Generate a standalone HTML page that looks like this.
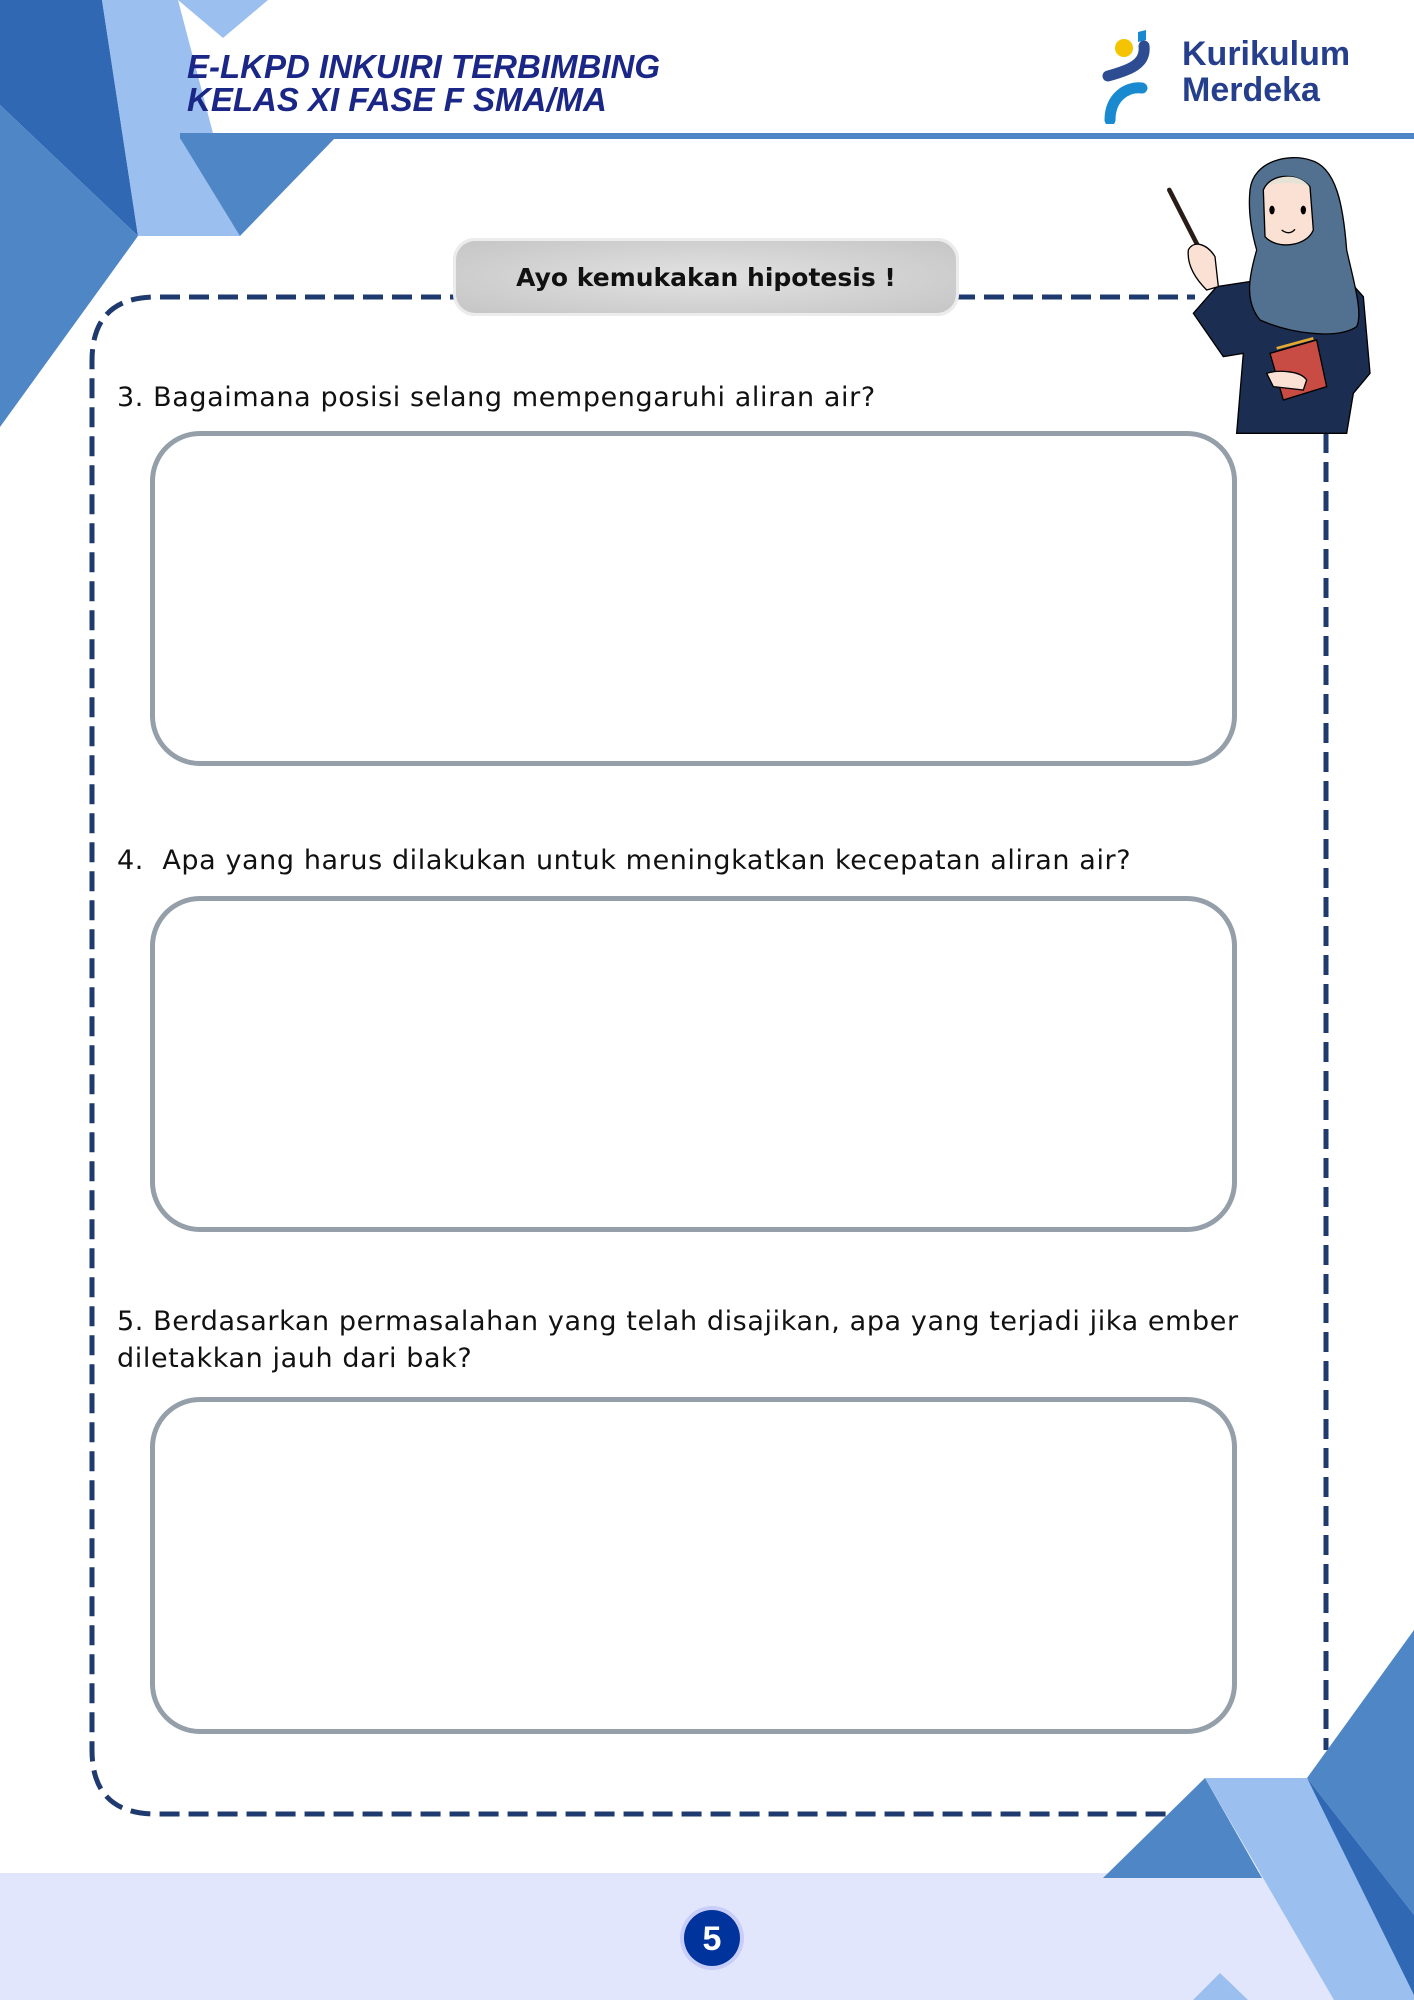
<!DOCTYPE html>
<html><head><meta charset="utf-8"><style>
html,body{margin:0;padding:0}
body{width:1414px;height:2000px;position:relative;overflow:hidden;background:#fff;font-family:"Liberation Sans",sans-serif}
.abs{position:absolute}
.hdr{left:187px;top:50px;color:#1b2787;font-weight:bold;font-style:italic;font-size:33px;line-height:33px;letter-spacing:0px}
.q{position:absolute;left:117px;font-family:"DejaVu Sans",sans-serif;font-size:27px;color:#111;line-height:37px;letter-spacing:0.6px}
.box{position:absolute;left:150px;width:1077px;border:5px solid #959fa9;border-radius:50px}
</style></head><body>
<svg class="abs" style="left:0;top:0" width="1414" height="2000">
<polygon points="0,0 102,0 138,236 0,105" fill="#3068b4"/>
<polygon points="0,105 138,236 0,427" fill="#4f86c6"/>
<polygon points="102,0 178,0 240,236 138,236" fill="#9bbfef"/>
<polygon points="180,138 335,138 240,236" fill="#4f86c6"/>
<polygon points="178,0 268,0 223,38" fill="#9bbfef"/>
<rect x="180" y="133" width="1234" height="6" fill="#4f86c6"/>
<rect x="0" y="1873" width="1414" height="127" fill="#e1e6fc"/>
<path d="M470,297 L156,297 Q92,297 92,361 L92,1750 Q92,1814 156,1814 L1200,1814" fill="none" stroke="#1f3a6e" stroke-width="5" stroke-dasharray="20,9"/>
<path d="M955,297 L1195,297" fill="none" stroke="#1f3a6e" stroke-width="5" stroke-dasharray="20,9"/>
<path d="M1326,433 L1326,1750" fill="none" stroke="#1f3a6e" stroke-width="5" stroke-dasharray="20,9"/>
<polygon points="1103,1878 1205,1778 1262,1878" fill="#4f86c6"/>
<polygon points="1307,1778 1414,1630 1414,1915" fill="#4f86c6"/>
<polygon points="1307,1778 1414,1915 1414,2000" fill="#3068b4"/>
<polygon points="1205,1778 1307,1778 1414,1995 1414,2000 1334,2000" fill="#9bbfef"/>
<polygon points="1193,2000 1220,1973 1248,2000" fill="#9bbfef"/>
<circle cx="712" cy="1938" r="32" fill="#c9cdfa"/>
<circle cx="712" cy="1938" r="28" fill="#00349c"/>
<text x="712" y="1950" text-anchor="middle" font-family="Liberation Sans" font-weight="bold" font-size="34" fill="#fff">5</text>
</svg>

<div class="abs hdr">E-LKPD INKUIRI TERBIMBING<br>KELAS XI FASE F SMA/MA</div>

<svg class="abs" style="left:1100px;top:28px" width="80" height="96" viewBox="0 0 80 96">
<circle cx="24" cy="20" r="9" fill="#f4c400"/>
<path d="M38,4 l8,-2 l0,10 l-8,2z" fill="#1a8ad0"/>
<path d="M44,18 C46,36 30,42 8,48" stroke="#2e4c92" stroke-width="11" fill="none" stroke-linecap="round"/>
<path d="M10,92 C10,70 26,58 42,60" stroke="#1a8ad0" stroke-width="11" fill="none" stroke-linecap="round"/>
</svg>
<div class="abs" style="left:1182px;top:36px;color:#253f8c;font-weight:bold;font-size:34px;line-height:36px">Kurikulum<br>Merdeka</div>

<div class="abs" style="left:453px;top:238px;width:506px;height:78px;border-radius:22px;background:radial-gradient(ellipse at center,#e2e2e2 0%,#c4c4c4 100%);box-shadow:inset 0 0 0 3px #ececec"></div>
<div class="abs" style="left:453px;top:238px;width:506px;height:78px;line-height:80px;text-align:center;font-family:'DejaVu Sans',sans-serif;font-weight:bold;font-size:25px;color:#111">Ayo kemukakan hipotesis !</div>

<svg class="abs" style="left:1150px;top:140px" width="240" height="300" viewBox="0 0 720 900">
<line x1="58" y1="150" x2="150" y2="330" stroke="#2a1d18" stroke-width="14" stroke-linecap="round"/>
<path d="M130,520 L200,440 L330,420 L560,380 L640,470 L660,700 L610,760 L590,880 L260,880 L280,640 L220,650 Z" fill="#1b2e52" stroke="#000" stroke-width="4"/>
<path d="M115,330 C130,300 170,310 195,350 L205,440 L170,450 C140,420 110,380 115,330Z" fill="#fbe1d3" stroke="#000" stroke-width="4"/>
<path d="M300,150 C310,60 420,40 480,60 C560,80 580,200 590,330 C610,420 640,520 620,560 C560,600 420,580 330,540 C280,480 300,400 320,330 C300,260 295,200 300,150Z" fill="#52708f" stroke="#000" stroke-width="4"/>
<path d="M340,150 C360,100 440,95 480,140 L490,270 C470,320 380,330 345,290 Z" fill="#fbe1d3" stroke="#000" stroke-width="4"/>
<path d="M350,140 C380,100 450,100 478,140 C440,125 380,125 350,140Z" fill="#e5e2d6"/>
<ellipse cx="366" cy="210" rx="8" ry="13" fill="#000"/>
<ellipse cx="460" cy="210" rx="8" ry="13" fill="#000"/>
<path d="M395,270 C410,282 425,280 435,268" stroke="#000" stroke-width="4" fill="none"/>
<path d="M360,640 L500,600 L530,740 L400,780 Z" fill="#c84c44" stroke="#000" stroke-width="4"/>
<path d="M380,625 L490,595" stroke="#e3a832" stroke-width="8"/>
<path d="M350,700 C380,690 450,690 470,720 L460,750 L370,740 Z" fill="#fbe1d3" stroke="#000" stroke-width="4"/>
</svg>

<div class="q" style="top:379px">3. Bagaimana posisi selang mempengaruhi aliran air?</div>
<div class="box" style="top:431px;height:325px"></div>
<div class="q" style="top:842px">4.&nbsp; Apa yang harus dilakukan untuk meningkatkan kecepatan aliran air?</div>
<div class="box" style="top:896px;height:326px"></div>
<div class="q" style="top:1303px">5. Berdasarkan permasalahan yang telah disajikan, apa yang terjadi jika ember<br>diletakkan jauh dari bak?</div>
<div class="box" style="top:1397px;height:327px"></div>
</body></html>
